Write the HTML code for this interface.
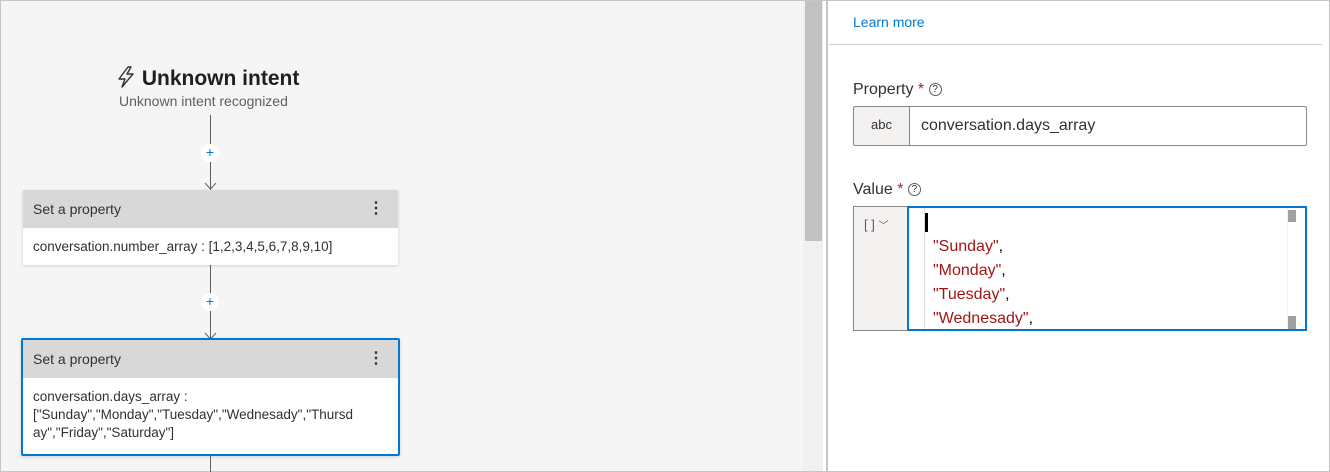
<!DOCTYPE html>
<html><head><style>
*{box-sizing:border-box;margin:0;padding:0}
body{width:1330px;height:472px;position:relative;overflow:hidden;background:#fff;font-family:"Liberation Sans",sans-serif;color:#323130}
.a{position:absolute}
.card{position:absolute;background:#fff;box-shadow:0 1px 3px rgba(0,0,0,.15)}
.hd{background:#d8d8d8;height:38px;font-size:14px;line-height:38px;padding-left:10px;position:relative}
.dots{position:absolute;right:14px;top:0;font-size:16px;font-weight:bold}
.bd{font-size:13.5px;padding:10px;line-height:18px}
.plus{position:absolute;width:18px;height:18px;border-radius:50%;background:#fff;color:#0078d4;font-size:14px;line-height:17px;text-align:center}
.red{color:#a31515}
</style></head><body>
<div class="a" style="left:0;top:0;width:1330px;height:472px;border:1px solid #c6c6c6"></div>
<div class="a" style="left:1px;top:1px;width:802px;height:470px;background:#f5f5f5"></div>
<div class="a" style="left:803px;top:1px;width:20px;height:470px;background:#f0f0f0"></div>
<div class="a" style="left:805px;top:1px;width:17px;height:240px;background:#c1c1c1"></div>
<div class="a" style="left:826px;top:1px;width:2px;height:470px;background:#c6c6c6"></div>

<div class="a" style="left:116px;top:66px;font-size:21px;font-weight:bold;color:#201f1e">
<svg width="20" height="22" viewBox="0 0 20 22" style="vertical-align:-3px"><path d="M12 1 L3 13 H9 L6 21 L17 8 H11 L15 1 Z" fill="none" stroke="#323130" stroke-width="1.4" stroke-linejoin="round"/></svg> Unknown intent</div>
<div class="a" style="left:119px;top:93px;font-size:14px;color:#605e5c">Unknown intent recognized</div>

<div class="a" style="left:210px;top:115px;width:1px;height:75px;background:#605e5c"></div>
<svg class="a" style="left:204px;top:180px" width="13" height="10"><path d="M1 3 L6.5 9 L12 3" fill="none" stroke="#605e5c"/></svg>
<div class="plus" style="left:201px;top:144px">+</div>

<div class="card" style="left:23px;top:190px;width:375px;height:75px">
<div class="hd">Set a property<span class="dots">⋮</span></div>
<div class="bd">conversation.number_array : [1,2,3,4,5,6,7,8,9,10]</div></div>

<div class="a" style="left:210px;top:265px;width:1px;height:75px;background:#605e5c"></div>
<svg class="a" style="left:204px;top:330px" width="13" height="10"><path d="M1 3 L6.5 9 L12 3" fill="none" stroke="#605e5c"/></svg>
<div class="plus" style="left:201px;top:293px">+</div>

<div class="card" style="left:21px;top:338px;width:379px;height:118px;border:2px solid #0078d4;border-radius:2px">
<div class="hd" style="height:38px">Set a property<span class="dots">⋮</span></div>
<div class="bd" style="padding-top:10px">conversation.days_array :<br>["Sunday","Monday","Tuesday","Wednesady","Thursd<br>ay","Friday","Saturday"]</div></div>
<div class="a" style="left:210px;top:456px;width:1px;height:16px;background:#605e5c"></div>

<div class="a" style="left:853px;top:14px;font-size:14px;color:#0078d4">Learn more</div>
<div class="a" style="left:829px;top:44px;width:493px;height:1px;background:#d0d0d0"></div>
<div class="a" style="left:853px;top:81px;font-size:16px;color:#323130">Property <span style="color:#a4262c">*</span> <span style="border:1px solid #605e5c;border-radius:50%;display:inline-block;width:13px;height:13px;line-height:12px;text-align:center;font-size:10px;vertical-align:2px">?</span></div>
<div class="a" style="left:853px;top:106px;width:57px;height:40px;background:#f3f2f1;border:1px solid #8a8886;border-radius:2px 0 0 2px;font-size:13px;text-align:center;line-height:36px">abc</div>
<div class="a" style="left:909px;top:106px;width:398px;height:40px;border:1px solid #8a8886;border-radius:0 2px 2px 0;font-size:16px;line-height:38px;padding-left:11px">conversation.days_array</div>

<div class="a" style="left:853px;top:181px;font-size:16px">Value <span style="color:#a4262c">*</span> <span style="border:1px solid #605e5c;border-radius:50%;display:inline-block;width:13px;height:13px;line-height:12px;text-align:center;font-size:10px;vertical-align:2px">?</span></div>
<div class="a" style="left:853px;top:206px;width:55px;height:125px;background:#f3f2f1;border:1px solid #8a8886;font-size:13px;color:#605e5c;padding:10px 0 0 10px">[ ] <span style="font-size:10px">﹀</span></div>
<div class="a" style="left:907px;top:206px;width:400px;height:125px;border:2px solid #0078d4;background:#fff;overflow:hidden">
<div class="a" style="left:15px;top:0;width:1px;height:121px;background:#ddd"></div>
<div class="a" style="left:16px;top:5px;width:3px;height:19px;background:#000"></div>
<div class="a" style="left:378px;top:0;width:1px;height:121px;background:#eee"></div>
<div class="a" style="left:379px;top:2px;width:8px;height:12px;background:#a0a0a0"></div>
<div class="a" style="left:379px;top:108px;width:8px;height:13px;background:#a0a0a0"></div>
<div class="a red" style="left:24px;top:27px;font-size:16px;line-height:24px">"Sunday"<span style="color:#000">,</span><br>"Monday"<span style="color:#000">,</span><br>"Tuesday"<span style="color:#000">,</span><br>"Wednesady"<span style="color:#000">,</span></div>
</div>
</body></html>
